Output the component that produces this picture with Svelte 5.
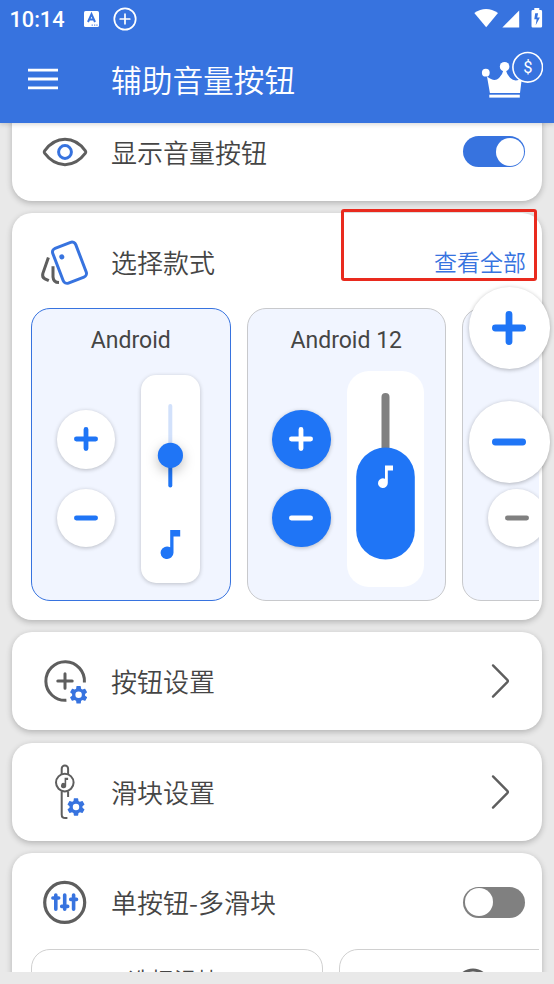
<!--
  Settings screen of the assistive volume button app. Status bar and app bar
  on top, a scrolled list of setting cards below, and the floating volume
  buttons over everything.
-->
<script lang="ts">
  interface VolumeStyle {
    id: string
    name: string
    variant: 'classic' | 'filled' | 'muted'
  }

  const styles: VolumeStyle[] = [
    { id: 'android', name: 'Android', variant: 'classic' },
    { id: 'android12', name: 'Android 12', variant: 'filled' },
    { id: 'plain', name: '', variant: 'muted' },
  ]

  let visible = $state(true)
  let multi = $state(false)
  let selected = $state('android')
</script>

{#snippet sign(kind: string, size: number)}
  <svg width={size} height={size} viewBox="0 0 24 24" fill="none" stroke="currentColor" stroke-width="4.8" stroke-linecap="round">
    <path d={kind === 'plus' ? 'M2.4 12h19.2M12 2.4v19.2' : 'M2.4 12h19.2'} />
  </svg>
{/snippet}

{#snippet gear()}
  <g transform="translate(-12 -12)">
    <path
      fill="#3773df"
      d="M19.43 12.98c.04-.32.07-.64.07-.98s-.03-.66-.07-.98l2.11-1.65c.19-.15.24-.42.12-.64l-2-3.46c-.12-.22-.39-.3-.61-.22l-2.49 1c-.52-.4-1.08-.73-1.69-.98l-.38-2.65A.49.49 0 0 0 14 2h-4c-.25 0-.46.18-.49.42l-.38 2.65c-.61.25-1.17.59-1.69.98l-2.49-1c-.23-.09-.49 0-.61.22l-2 3.46c-.13.22-.07.49.12.64l2.11 1.65c-.04.32-.07.65-.07.98s.03.66.07.98l-2.11 1.65c-.19.15-.24.42-.12.64l2 3.46c.12.22.39.3.61.22l2.49-1c.52.4 1.08.73 1.69.98l.38 2.65c.03.24.24.42.49.42h4c.25 0 .46-.18.49-.42l.38-2.65c.61-.25 1.17-.59 1.69-.98l2.49 1c.23.09.49 0 .61-.22l2-3.46c.12-.22.07-.49-.12-.64l-2.11-1.65zM12 15.7a3.7 3.7 0 1 1 0-7.4 3.7 3.7 0 0 1 0 7.4z"
    />
  </g>
{/snippet}

{#snippet chevron()}
  <svg class="chevron" width="22" height="38" viewBox="0 0 22 38" fill="none" stroke="#5e5e5e" stroke-width="2.4" stroke-linecap="round" stroke-linejoin="round">
    <path d="M3 3.4 17.3 17.8q1.2 1.2 0 2.4L3 34.6" />
  </svg>
{/snippet}

<div class="screen">
  <header>
    <div class="status">
      <span class="time">10:14</span>
      <svg class="ime" width="15" height="16" viewBox="0 0 15 16">
        <rect width="15" height="16" rx="1.6" fill="#fff" />
        <path d="M4 11 7.5 3.2 11 11M5.4 8.6h4.2" fill="none" stroke="#3773df" stroke-width="2" />
        <path d="M7.6 14.1h1.3M10 14.1h1.3M12.3 14.1h1.3" stroke="#3773df" />
      </svg>
      <svg class="add" width="24" height="24" viewBox="0 0 24 24" fill="none" stroke="#fff" stroke-width="1.7" stroke-linecap="round">
        <circle cx="12" cy="12" r="10.7" />
        <path d="M7.2 12h9.6M12 7.2v9.6" />
      </svg>
      <svg class="signals" width="70" height="22" viewBox="0 0 70 22" fill="#fff">
        <path d="M.3 5Q12 -3.2 24 5L12.2 19.3z" />
        <path d="M28.3 19.5 45.2 2.6v16.9z" />
        <path d="M57.5 3.4q0-1.3 1.3-1.3h1.5V0h5v2.1h1.5q1.3 0 1.3 1.3v14.9q0 1.2-1.3 1.2h-8q-1.3 0-1.3-1.2z" />
        <path d="M64.1 5.2h-2.9l-.9 6h2.3l-.9 6 4.2-7.7h-2.7z" fill="#3773df" />
      </svg>
    </div>
    <div class="appbar">
      <svg class="menu" width="30" height="22" viewBox="0 0 30 22" stroke="#fff" stroke-width="2.8">
        <path d="M0 2.1h30M0 11h30M0 19.9h30" />
      </svg>
      <h1>辅助音量按钮</h1>
      <svg class="crown" width="64" height="50" viewBox="0 0 64 50" fill="#fff">
        <circle cx="6.8" cy="24.7" r="3.9" />
        <circle cx="25.6" cy="18.7" r="4.8" />
        <path d="M8 28.5Q15.5 34.5 20 30 23.8 26 24.5 22h2.3q.8 4 4.5 8 4.5 4.5 11.5.5L41 44.9H10.9z" />
        <path d="M10.3 46.7h30.5v2.9H10.3z" />
        <circle cx="48.7" cy="19.3" r="14.8" fill="#3773df" stroke="#fff" stroke-width="1.6" />
        <text x="49" y="25.2" text-anchor="middle" font-family="Roboto, sans-serif" font-size="16.5">$</text>
      </svg>
    </div>
  </header>

  <main>
    <section class="card">
      <div class="row">
        <svg class="icon" width="60" height="60" viewBox="-30 -30 60 60" fill="none" stroke-width="3">
          <path stroke="#5e5e5e" d="M-20.4-1.2C-9-16.5 9-16.5 20.4-1.2q.8 1.2 0 2.4C9 16.5-9 16.5-20.4 1.2q-.8-1.2 0-2.4z" />
          <circle r="6.4" stroke="#3773df" />
        </svg>
        <span class="label">显示音量按钮</span>
        <button type="button" class="switch" class:on={visible} aria-label="显示音量按钮" onclick={() => (visible = !visible)}></button>
      </div>
    </section>

    <section class="card styles">
      <div class="row">
        <svg class="icon" width="60" height="60" viewBox="-30 -30 60 60" fill="none" stroke-width="3">
          <g stroke="#5e5e5e">
            <path d="M-16.6-4.6-22.2 11.6q-1 3.6 2.2 5.3l3.8 1.8" />
            <path d="M-12 4.2v10.6q.3 5.6 6 5.8" />
          </g>
          <g transform="translate(0 .7) rotate(-21 4.5 0)" stroke="#3773df">
            <rect x="-7.8" y="-18.6" width="24.6" height="37.2" rx="4" />
            <circle cx="-.6" cy="-8.2" r="2.5" fill="#3773df" stroke="none" />
          </g>
        </svg>
        <span class="label">选择款式</span>
        <a class="all" href="#all">查看全部</a>
      </div>
      <div class="strip">
        {#each styles as s (s.id)}
          <button type="button" class="style {s.variant}" class:selected={s.id === selected} onclick={() => (selected = s.id)}>
            <span class="name">{s.name}</span>
            <span class="preview">
              <span class="keys">
                <span class="key">{@render sign('plus', 24)}</span>
                <span class="key">{@render sign('minus', 24)}</span>
              </span>
              {#if s.variant === 'classic'}
                <span class="panel">
                  <svg width="59" height="208" viewBox="0 0 59 208">
                    <path d="M29.3 31v50" stroke="#d2e1fb" stroke-width="4" stroke-linecap="round" />
                    <path d="M29.3 81v29.5" stroke="#1f75f6" stroke-width="4" stroke-linecap="round" />
                    <circle class="thumb" cx="29.4" cy="80.4" r="12.6" fill="#1f75f6" />
                    <path fill="#1f75f6" d="M29.2 155h10v6.6h-6.7v16.2a6.5 6.3 0 1 1-3.3-5.5z" />
                  </svg>
                </span>
              {:else if s.variant === 'filled'}
                <span class="panel">
                  <svg width="77" height="216" viewBox="0 0 77 216">
                    <path d="M38.5 26v60" stroke="#808080" stroke-width="8" stroke-linecap="round" />
                    <rect x="9.2" y="76.5" width="58.6" height="112" rx="29.3" fill="#1f75f6" />
                    <path fill="#fff" d="M38 94.5h8v5h-5.2v12.6a4.9 4.9 0 1 1-2.8-4.4z" />
                  </svg>
                </span>
              {/if}
            </span>
          </button>
        {/each}
      </div>
    </section>

    <section class="card">
      <div class="row">
        <svg class="icon" width="60" height="60" viewBox="-30 -30 60 60" fill="none" stroke="#5e5e5e" stroke-width="3">
          <path d="M1.4 19.3A19.3 19.3 0 1 1 19.4 1.5" />
          <path d="M-7.2 0H7.2M0-7.2V7.2" stroke-linecap="round" />
          <g transform="translate(13.6 13.8) scale(.87)" stroke="none">{@render gear()}</g>
        </svg>
        <span class="label">按钮设置</span>
        {@render chevron()}
      </div>
    </section>

    <section class="card">
      <div class="row">
        <svg class="icon" width="60" height="60" viewBox="-30 -30 60 60" fill="none" stroke="#5e5e5e" stroke-width="2">
          <path d="M-3.3-17.5v-5.7a3.2 3.2 0 0 1 6.4 0v5.7" />
          <circle cx="-.2" cy="-9.4" r="8.8" />
          <path d="M-3.3-.6v23q0 3.6 3.6 3.6H2.4M3.1-.6V5" />
          <path d="M-.4-14.3H3.1v2.3H1.2v5.5a2.6 2.6 0 1 1-1.6-2.3z" fill="#5e5e5e" stroke="none" />
          <g transform="translate(11 15) scale(.87)" stroke="none">{@render gear()}</g>
        </svg>
        <span class="label">滑块设置</span>
        {@render chevron()}
      </div>
    </section>

    <section class="card multi">
      <div class="row">
        <svg class="icon" width="60" height="60" viewBox="-30 -30 60 60" fill="none" stroke-width="3.2" stroke-linecap="round">
          <circle cx="-.3" cy=".4" r="20" stroke="#5e5e5e" />
          <path stroke="#3773df" stroke-width="3.6" d="M-9.2-7V7.2M-.3-7V7.2M8.6-7V7.2M-12.1-4h5.8M-3.3 4.4h6M5.7-2.6h5.8" />
        </svg>
        <span class="label">单按钮-多滑块</span>
        <button type="button" class="switch" class:on={multi} aria-label="单按钮-多滑块" onclick={() => (multi = !multi)}></button>
      </div>
      <div class="strip">
        <div class="option">选择滑块</div>
        <div class="option">
          <svg width="36" height="36" viewBox="0 0 36 36" fill="none" stroke="#5e5e5e" stroke-width="3">
            <circle cx="18" cy="18" r="16" />
          </svg>
        </div>
      </div>
    </section>
  </main>

  <div class="marker"></div>
  <div class="floating">
    <button type="button" aria-label="+">{@render sign('plus', 34)}</button>
    <button type="button" aria-label="-">{@render sign('minus', 34)}</button>
  </div>
</div>

<style>
  :global(body) {
    background: #e9e9e9;
  }
  .screen {
    position: relative;
    display: flex;
    flex-direction: column;
    width: 554px;
    height: 984px;
    overflow: hidden;
    background: #e9e9e9;
    color: #454545;
    font-family: Roboto, 'Noto Sans CJK SC', sans-serif;
  }
  svg {
    display: block;
    flex: none;
  }
  button {
    padding: 0;
    border: none;
    color: inherit;
    font: inherit;
    cursor: pointer;
  }

  header {
    flex: none;
    height: 123px;
    background: #3773df;
    color: #fff;
    z-index: 1;
    box-shadow: 0 1px 5px rgba(0, 0, 0, 0.18);
  }
  .status {
    display: flex;
    align-items: center;
    height: 37px;
    padding: 0 10px 0 9.5px;
  }
  .time {
    width: 74.5px;
    font-size: 21.7px;
    font-weight: 500;
    line-height: 38px;
    padding-top: 2px;
  }
  .add {
    margin-left: 14px;
  }
  .signals {
    margin-left: auto;
  }
  .appbar {
    display: flex;
    align-items: center;
    height: 86px;
    padding: 0 11px 0 28px;
  }
  .menu {
    margin-bottom: 2px;
  }
  h1 {
    flex: 1;
    margin: 3px 0 0 53px;
    font-size: 30.7px;
    font-weight: 350;
    line-height: 40px;
  }
  .crown {
    margin-bottom: 14px;
  }

  main {
    display: flex;
    flex-direction: column;
    gap: 12.5px;
    height: 849px;
    padding: 0 12px;
    overflow: hidden;
    box-sizing: border-box;
  }
  .card {
    flex: none;
    height: 98px;
    border-radius: 20px;
    background: #fff;
    box-shadow: 0 2px 6px rgba(0, 0, 0, 0.24);
  }
  .card:first-child {
    margin-top: -20.5px;
  }
  .card.styles {
    height: 406.5px;
  }
  .card.multi {
    height: 220px;
  }
  .row {
    display: flex;
    align-items: center;
    height: 98px;
    padding: 0 17px 0 22.5px;
  }
  .label {
    flex: 1;
    margin: 0 0 0 16.5px;
    font-family: 'Noto Sans CJK SC', sans-serif;
    font-size: 26px;
    font-weight: 350;
    line-height: 36px;
  }
  .all {
    margin: -2px -1px 0 0;
    color: #3773df;
    font-size: 23px;
    font-weight: 350;
    text-decoration: none;
  }
  .chevron {
    margin-right: 13px;
  }

  .switch {
    width: 62px;
    height: 31px;
    padding: 1.5px;
    border-radius: 16px;
    background: #808080;
  }
  .switch::before {
    content: '';
    display: block;
    width: 28px;
    height: 28px;
    border-radius: 50%;
    background: #fff;
  }
  .switch.on {
    background: #3773df;
  }
  .switch.on::before {
    margin-left: auto;
  }

  .strip {
    display: flex;
    gap: 16px;
    margin: -3px 3px 0 19px;
    overflow: hidden;
  }
  .style {
    display: flex;
    flex: none;
    flex-direction: column;
    box-sizing: border-box;
    width: 199.5px;
    height: 292.5px;
    border: 1.5px solid #c8c9cc;
    border-radius: 19px;
    background: #f1f5ff;
  }
  .style.selected {
    border-color: #3773df;
  }
  .name {
    width: 100%;
    height: 27px;
    margin-top: 18px;
    font-size: 23px;
    line-height: 27px;
    text-align: center;
  }
  .preview {
    display: flex;
    align-items: center;
    height: 216px;
    margin-top: 16.5px;
    padding-left: 24.5px;
    gap: 25.5px;
  }
  .filled .preview {
    gap: 16.5px;
    padding-left: 24.5px;
  }
  .keys {
    display: flex;
    flex-direction: column;
    gap: 20px;
  }
  .key {
    display: grid;
    place-items: center;
    width: 58.5px;
    height: 58.5px;
    border-radius: 50%;
    background: #fff;
    color: #1f75f6;
    box-shadow: 0 1px 4px rgba(0, 0, 0, 0.24);
  }
  .filled .key {
    background: #1f75f6;
    color: #fff;
  }
  .muted .key {
    color: #808080;
  }
  .panel {
    border-radius: 15px;
    background: #fff;
  }
  .classic .panel {
    box-shadow: 0 1px 4px rgba(0, 0, 0, 0.22);
  }
  .filled .panel {
    border-radius: 22px;
  }
  .thumb {
    filter: drop-shadow(0 4px 6px rgba(0, 0, 0, 0.25));
  }

  .multi .strip {
    margin-top: -2px;
  }
  .option {
    display: flex;
    flex: none;
    justify-content: center;
    box-sizing: border-box;
    width: 292px;
    height: 80px;
    padding-top: 17px;
    padding-right: 6px;
    border: 1.5px solid #d0d0d0;
    border-radius: 19px;
    font-size: 23px;
    font-weight: 350;
    line-height: 30px;
  }
  .option + .option {
    padding-top: 18px;
    padding-right: 24px;
  }

  /* Highlight frame around the "view all" link */
  .marker {
    position: absolute;
    top: 209px;
    left: 341px;
    z-index: 2;
    box-sizing: border-box;
    width: 196px;
    height: 72px;
    border: 3px solid #e92a1e;
    border-radius: 3px;
    pointer-events: none;
  }
  .floating {
    position: absolute;
    top: 287px;
    left: 468.5px;
    z-index: 2;
    display: flex;
    flex-direction: column;
    gap: 32.5px;
  }
  .floating button {
    display: grid;
    place-items: center;
    width: 81.5px;
    height: 81.5px;
    border-radius: 50%;
    background: #fff;
    color: #1f75f6;
    box-shadow: 0 1px 4px rgba(0, 0, 0, 0.28);
  }
</style>
